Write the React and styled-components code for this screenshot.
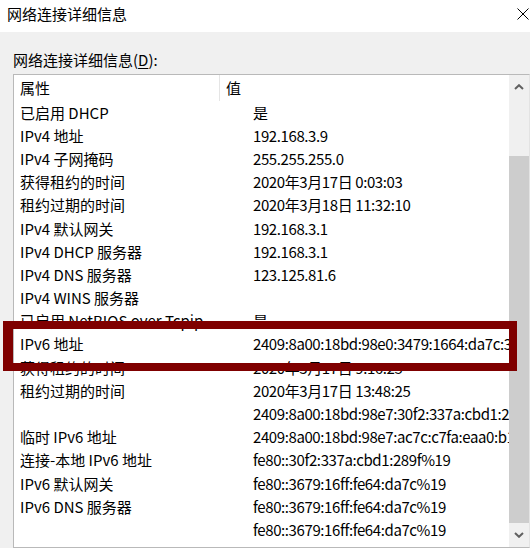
import styled, { createGlobalStyle } from "styled-components";

const rows = [
  ["已启用 DHCP", "是"],
  ["IPv4 地址", "192.168.3.9"],
  ["IPv4 子网掩码", "255.255.255.0"],
  ["获得租约的时间", "2020年3月17日 0:03:03"],
  ["租约过期的时间", "2020年3月18日 11:32:10"],
  ["IPv4 默认网关", "192.168.3.1"],
  ["IPv4 DHCP 服务器", "192.168.3.1"],
  ["IPv4 DNS 服务器", "123.125.81.6"],
  ["IPv4 WINS 服务器", ""],
  ["已启用 NetBIOS over Tcpip", "是"],
  ["IPv6 地址", "2409:8a00:18bd:98e0:3479:1664:da7c:3479"],
  ["获得租约的时间", "2020年3月17日 9:16:25"],
  ["租约过期的时间", "2020年3月17日 13:48:25"],
  ["", "2409:8a00:18bd:98e7:30f2:337a:cbd1:289f"],
  ["临时 IPv6 地址", "2409:8a00:18bd:98e7:ac7c:c7fa:eaa0:b1c2"],
  ["连接-本地 IPv6 地址", "fe80::30f2:337a:cbd1:289f%19"],
  ["IPv6 默认网关", "fe80::3679:16ff:fe64:da7c%19"],
  ["IPv6 DNS 服务器", "fe80::3679:16ff:fe64:da7c%19"],
  ["", "fe80::3679:16ff:fe64:da7c%19"],
];

export default function App() {
  return (
    <>
      <GlobalStyle />
      <Dialog>
        <TitleBar>
          <Title>网络连接详细信息</Title>
          <CloseIcon viewBox="0 0 12 12">
            <path d="M0.5 0.5L11.5 11.5M11.5 0.5L0.5 11.5" />
          </CloseIcon>
        </TitleBar>
        <Panel>
          <Label>
            网络连接详细信息(<u>D</u>):
          </Label>
          <ListBox>
            <ListContent>
              <HeaderRow>
                <HeaderCell>属性</HeaderCell>
                <HeaderDivider />
                <HeaderCell $value>值</HeaderCell>
              </HeaderRow>
              {rows.map(([name, value], i) => (
                <Row key={i}>
                  <NameCell>{name}</NameCell>
                  <ValueCell>{value}</ValueCell>
                </Row>
              ))}
            </ListContent>
            <Scrollbar>
              <ScrollButton>
                <Chevron viewBox="0 0 10 6">
                  <path d="M1 5L5 1.2L9 5" />
                </Chevron>
              </ScrollButton>
              <Track>
                <Thumb />
              </Track>
              <ScrollButton>
                <Chevron viewBox="0 0 10 6">
                  <path d="M1 1L5 4.8L9 1" />
                </Chevron>
              </ScrollButton>
            </Scrollbar>
          </ListBox>
        </Panel>
        <Highlight />
      </Dialog>
    </>
  );
}

const GlobalStyle = createGlobalStyle`
  html, body {
    margin: 0;
    padding: 0;
    background: #ffffff;
  }
  body {
    font-family: "Noto Sans CJK SC", "Noto Sans", sans-serif;
    font-size: 15px;
    color: #000000;
  }
`;

const Dialog = styled.div`
  position: relative;
  width: 530px;
  height: 548px;
  overflow: hidden;
  display: flex;
  flex-direction: column;
`;

const TitleBar = styled.div`
  height: 32px;
  flex: none;
  background: #ffffff;
  display: flex;
  align-items: center;
  justify-content: space-between;
  padding: 0 1px 4px 7px;
  box-sizing: border-box;
`;

const Title = styled.div`
  font-size: 15px;
  line-height: 20px;
`;

const CloseIcon = styled.svg`
  width: 12px;
  height: 12px;
  fill: none;
  stroke: #000000;
  stroke-width: 1;
`;

const Panel = styled.div`
  flex: 1;
  background: #f0f0f0;
  display: flex;
  flex-direction: column;
  padding: 18px 0 0 13px;
  min-height: 0;
`;

const Label = styled.div`
  line-height: 20px;
  margin-bottom: 4px;

  u {
    text-decoration-thickness: 1px;
    text-underline-offset: 2px;
  }
`;

const ListBox = styled.div`
  flex: 1;
  display: flex;
  background: #ffffff;
  border: 1px solid #b9b9b9;
  border-right-color: #e3e3e3;
  min-height: 0;
  overflow: hidden;
`;

const ListContent = styled.div`
  flex: 1;
  min-width: 0;
  overflow: hidden;
`;

const HeaderRow = styled.div`
  display: flex;
  height: 26px;
  align-items: center;
`;

const HeaderCell = styled.div`
  line-height: 20px;
  padding-left: 6px;
  width: ${(p) => (p.$value ? "auto" : "199px")};
  flex: ${(p) => (p.$value ? "1" : "none")};
`;

const HeaderDivider = styled.div`
  width: 1px;
  align-self: stretch;
  background: #e5e5e5;
`;

const Row = styled.div`
  display: flex;
  height: 23.2px;
  align-items: center;
  white-space: nowrap;
`;

const NameCell = styled.div`
  width: 206px;
  flex: none;
  padding-left: 6px;
  box-sizing: border-box;
  overflow: hidden;
  line-height: 20px;
`;

const ValueCell = styled.div`
  flex: 1;
  padding-left: 33px;
  overflow: hidden;
  line-height: 20px;
  letter-spacing: -0.4px;
`;

const Scrollbar = styled.div`
  width: 20px;
  flex: none;
  background: #f0f0f0;
  display: flex;
  flex-direction: column;
`;

const ScrollButton = styled.div`
  height: 24px;
  flex: none;
  display: flex;
  align-items: center;
  justify-content: center;
`;

const Chevron = styled.svg`
  width: 10px;
  height: 6px;
  fill: none;
  stroke: #606060;
  stroke-width: 2;
`;

const Track = styled.div`
  flex: 1;
  display: flex;
  flex-direction: column;
  padding-top: 57px;
`;

const Thumb = styled.div`
  flex: 1;
  background: #cdcdcd;
`;

const Highlight = styled.div`
  position: absolute;
  left: 3px;
  top: 321px;
  width: 514px;
  height: 50px;
  box-sizing: border-box;
  border: 8px solid #7f0000;
  border-left-width: 10px;
  pointer-events: none;
`;
